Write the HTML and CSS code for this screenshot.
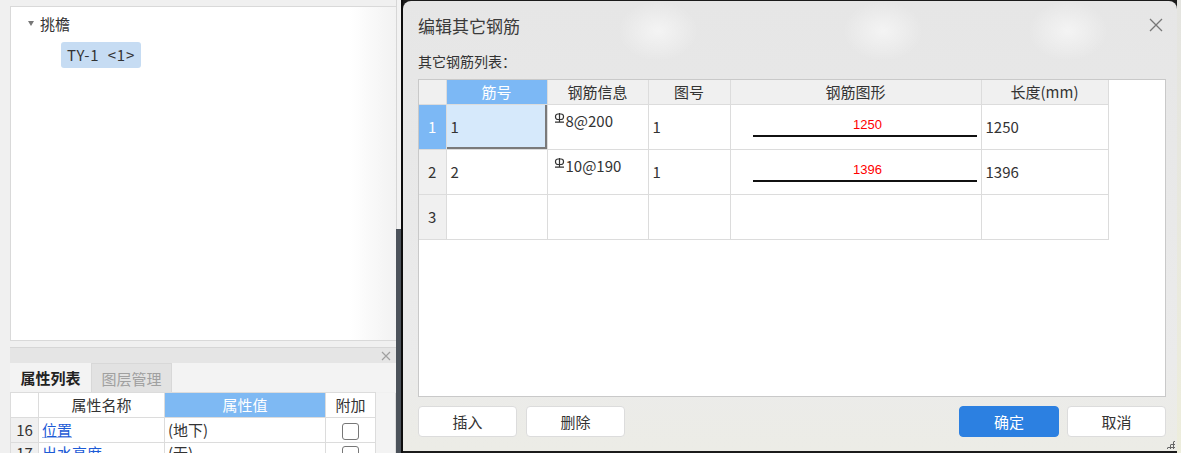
FILE: index.html
```html
<!DOCTYPE html>
<html lang="zh-CN">
<head>
  <meta charset="UTF-8">
  <title>编辑其它钢筋</title>
  <link rel="stylesheet" href="styles.css">
</head>
<body>
  <div class="left">
    <div class="caption"></div>
    <div class="tree-box">
      <div class="tree-node">
        <span class="tri"></span><span>挑檐</span>
      </div>
      <div class="tree-leaf"><span class="leaf-sel">TY-1 &nbsp;&lt;1&gt;</span></div>
    </div>

    <div class="prop-panel">
      <div class="prop-bar">
        <svg class="bar-close" width="10" height="10" viewBox="0 0 10 10">
          <path d="M1 1L9 9M9 1L1 9" stroke="#a0a0a0" stroke-width="1.2"/>
        </svg>
      </div>
      <div class="tabs">
        <span class="tab active">属性列表</span>
        <span class="tab">图层管理</span>
      </div>
      <table class="prop-table">
        <colgroup>
          <col style="width:28px"><col style="width:126px"><col style="width:161px"><col style="width:50px"><col>
        </colgroup>
        <tr class="prop-head">
          <td></td><td>属性名称</td><td class="hl">属性值</td><td>附加</td><td class="scroll"></td>
        </tr>
        <tr>
          <td class="num">16</td><td class="link">位置</td><td>(地下)</td><td class="chk"><span class="box"></span></td><td class="scroll"></td>
        </tr>
        <tr class="last">
          <td class="num">17</td><td class="link">出水高度</td><td>(无)</td><td class="chk"><span class="box"></span></td><td class="scroll"></td>
        </tr>
      </table>
    </div>
  </div>

  <div class="divider"><div class="div-top"></div><div class="div-bottom"></div></div>

  <div class="dialog">
    <div class="dlg-title">
      <span>编辑其它钢筋</span>
      <svg class="dlg-close" width="14" height="14" viewBox="0 0 14 14">
        <path d="M1 1L13 13M13 1L1 13" stroke="#777" stroke-width="1.3"/>
      </svg>
    </div>
    <div class="dlg-label">其它钢筋列表：</div>

    <div class="grid-box">
      <table class="grid">
        <colgroup>
          <col style="width:27px"><col style="width:101px"><col style="width:101px"><col style="width:82px"><col style="width:251px"><col style="width:127px">
        </colgroup>
        <tr class="grid-head">
          <td></td><td class="hl">筋号</td><td>钢筋信息</td><td>图号</td><td>钢筋图形</td><td>长度(mm)</td>
        </tr>
        <tr>
          <td class="rh sel">1</td>
          <td class="cur">1</td>
          <td class="info"><span class="info-row"><svg class="grade" width="11" height="10" viewBox="0 0 11 10"><rect x="1.5" y="1" width="8" height="5.5" rx="2.5" fill="none" stroke="#333" stroke-width="1.2"/><path d="M5.5 0V8.5M1 9.2H10" stroke="#333" stroke-width="1.2"/></svg>8@200</span></td>
          <td>1</td>
          <td class="shape"><span class="len">1250</span><span class="bar"></span></td>
          <td>1250</td>
        </tr>
        <tr>
          <td class="rh">2</td>
          <td>2</td>
          <td class="info"><span class="info-row"><svg class="grade" width="11" height="10" viewBox="0 0 11 10"><rect x="1.5" y="1" width="8" height="5.5" rx="2.5" fill="none" stroke="#333" stroke-width="1.2"/><path d="M5.5 0V8.5M1 9.2H10" stroke="#333" stroke-width="1.2"/></svg>10@190</span></td>
          <td>1</td>
          <td class="shape"><span class="len">1396</span><span class="bar"></span></td>
          <td>1396</td>
        </tr>
        <tr>
          <td class="rh">3</td><td></td><td></td><td></td><td></td><td></td>
        </tr>
      </table>
    </div>

    <div class="dlg-buttons">
      <button class="btn">插入</button>
      <button class="btn">删除</button>
      <span class="spacer"></span>
      <button class="btn primary">确定</button>
      <button class="btn">取消</button>
    </div>
    <span class="grip"></span>
  </div>

  <div class="edge"></div>
</body>
</html>
```

FILE: styles.css
```css
body {
  margin: 0;
  height: 453px;
  overflow: hidden;
  display: flex;
  background-color: #1b1b1b;
  font-family: "Noto Sans CJK SC", "Noto Sans", sans-serif;
  font-size: 15px;
  color: #333;
}

/* left dock */
.left {
  width: 396px;
  flex-shrink: 0;
  background-color: #f0f0f0;
  padding-left: 10px;
  box-sizing: border-box;
  display: flex;
  flex-direction: column;
}

.caption {
  height: 6px;
  flex-shrink: 0;
}

.tree-box {
  height: 335px;
  flex-shrink: 0;
  box-sizing: border-box;
  border: 1px solid #d9d9d9;
  border-right: none;
  background: linear-gradient(to right, #fff 88%, #f2f2f2);
}

.tree-node {
  display: flex;
  align-items: center;
  height: 24px;
  margin-top: 4px;
  padding-left: 17px;
  gap: 6px;
}

.tri {
  width: 0;
  height: 0;
  border-left: 3.5px solid transparent;
  border-right: 3.5px solid transparent;
  border-top: 5px solid #777;
}

.tree-leaf {
  padding-left: 50px;
  margin-top: 7px;
}

.leaf-sel {
  display: inline-block;
  height: 26px;
  line-height: 26px;
  padding: 0 6px;
  letter-spacing: 0.8px;
  background-color: #c6dcf3;
  border-radius: 3px;
}

.prop-panel {
  margin-top: 6px;
  flex: 1;
  display: flex;
  flex-direction: column;
  overflow: hidden;
}

.prop-bar {
  height: 15px;
  flex-shrink: 0;
  background-color: #e5e5e5;
  border-top: 1px solid #d6d6d6;
  display: flex;
  justify-content: flex-end;
  align-items: center;
}

.bar-close {
  margin-right: 5px;
}

.tabs {
  height: 29px;
  flex-shrink: 0;
  display: flex;
  background-color: #f3f3f3;
}

.tab {
  width: 81px;
  display: flex;
  align-items: center;
  justify-content: center;
  color: #a0a0a0;
  background-color: #e2e2e2;
  border: 1px solid #d8d8d8;
  border-bottom: none;
  box-sizing: border-box;
}

.tab.active {
  color: #222;
  font-weight: bold;
  background-color: #f3f3f3;
  border: none;
}

.prop-table {
  flex-shrink: 0;
  border-collapse: collapse;
  table-layout: fixed;
  width: 100%;
}

.prop-table tr {
  height: 25px;
}

.prop-table td {
  padding: 0 3px;
  line-height: 20px;
  border: 1px solid #dcdcdc;
  background-color: #fff;
  white-space: nowrap;
  overflow: hidden;
}

.prop-head td {
  text-align: center;
}

.prop-table td.hl {
  background-color: #7eb9f3;
  color: #fff;
}

.prop-table td.num {
  background-color: #f0f0f0;
  text-align: center;
  padding: 0;
}

.prop-table td.link {
  color: #1c5bd6;
  text-decoration: underline;
  text-decoration-color: #9db7ea;
}

.prop-table td.scroll {
  background-color: #f3f3f3;
  border-top: none;
  border-bottom: none;
}

.prop-table tr.last td {
  vertical-align: top;
}

.chk {
  text-align: center;
}

.box {
  display: inline-block;
  width: 15px;
  height: 15px;
  border: 1px solid #777;
  border-radius: 3px;
  vertical-align: middle;
}

/* splitter between dock and canvas */
.divider {
  width: 5px;
  flex-shrink: 0;
  display: flex;
  flex-direction: column;
  border-right: 2px solid #0d0d0d;
}

.div-top {
  height: 229px;
  background-color: #f2f2f2;
  border-left: 1px solid #d6d6d6;
}

.div-bottom {
  flex: 1;
  background-color: #4b525a;
}

/* dialog */
.dialog {
  width: 774px;
  flex-shrink: 0;
  height: 450px;
  margin-top: 1px;
  border-radius: 8px 8px 0 0;
  background:
    radial-gradient(ellipse 40px 30px at 255px 30px, rgba(255,255,255,0.55), transparent),
    radial-gradient(ellipse 40px 30px at 480px 30px, rgba(255,255,255,0.55), transparent),
    radial-gradient(ellipse 40px 30px at 665px 30px, rgba(255,255,255,0.55), transparent),
    linear-gradient(#e6e6e6, #ebebeb 80%, #ecece6);
  padding: 0 11px 0 15px;
  box-sizing: border-box;
  display: flex;
  flex-direction: column;
  position: relative;
}

.dlg-title {
  height: 48px;
  flex-shrink: 0;
  display: flex;
  align-items: center;
  justify-content: space-between;
  font-size: 17px;
  color: #3a3a3a;
}

.dlg-close {
  margin-right: 3px;
}

.dlg-label {
  height: 24px;
  flex-shrink: 0;
  line-height: 24px;
  font-size: 14px;
  color: #333;
}

.grid-box {
  margin-top: 6px;
  height: 318px;
  flex-shrink: 0;
  width: 748px;
  box-sizing: border-box;
  background-color: #fff;
  border: 1px solid #c9c9c9;
}

.grid {
  border-collapse: collapse;
  table-layout: fixed;
  width: 689px;
}

.grid tr {
  height: 45px;
}

.grid td {
  line-height: 20px;
  border: 1px solid #dcdcdc;
  padding: 0 4px;
  white-space: nowrap;
  background-color: #fff;
}

.grid tr:first-child td {
  border-top: none;
}

.grid td:first-child {
  border-left: none;
}

.grid tr.grid-head {
  height: 24px;
}

.grid-head td {
  background-color: #f0f0f0;
  text-align: center;
  color: #333;
}

.grid-head td.hl {
  background-color: #7cb8f5;
  color: #fff;
}

.grid td.rh {
  background-color: #f0f0f0;
  text-align: center;
  padding: 0;
}

.grid td.rh.sel {
  background-color: #7cb8f5;
  color: #fff;
}

.grid td.cur {
  background-color: #d6e9fb;
  box-shadow: inset -2px -2px 0 #7a7a7a;
}

.grid td.info {
  vertical-align: top;
  padding-top: 6px;
  padding-left: 6px;
}

.info-row {
  display: flex;
  align-items: flex-start;
}

.grade {
  margin-top: 2px;
  margin-right: 1px;
}

.grid td.shape {
  padding: 0 4px 0 22px;
  vertical-align: top;
}

.len {
  display: block;
  text-align: center;
  padding-left: 6px;
  margin-top: 13px;
  font-family: "Liberation Sans", sans-serif;
  font-size: 13px;
  line-height: 14px;
  color: #f00;
}

.bar {
  display: block;
  height: 2px;
  margin-top: 3px;
  background-color: #111;
}

.dlg-buttons {
  margin-top: 9px;
  flex-shrink: 0;
  display: flex;
  gap: 9px;
  width: 748px;
}

.spacer {
  flex: 1;
}

.btn {
  width: 99px;
  height: 31px;
  background-color: #fff;
  border: 1px solid #dcdcdc;
  border-radius: 4px;
  font-family: "Noto Sans CJK SC", sans-serif;
  font-size: 15px;
  color: #333;
  padding: 0;
}

.btn.primary {
  width: 100px;
  background-color: #2c80e1;
  border-color: #2c80e1;
  color: #fff;
  margin-right: -1px;
}

.grip {
  position: absolute;
  right: 2px;
  bottom: 2px;
  width: 9px;
  height: 9px;
  background:
    radial-gradient(circle, #666 1px, transparent 1.2px) 0 0 / 3px 3px;
  clip-path: polygon(100% 0, 100% 100%, 0 100%);
}

.edge {
  flex: 1;
  background: linear-gradient(#e4e4e0, #ededdc);
}
```
